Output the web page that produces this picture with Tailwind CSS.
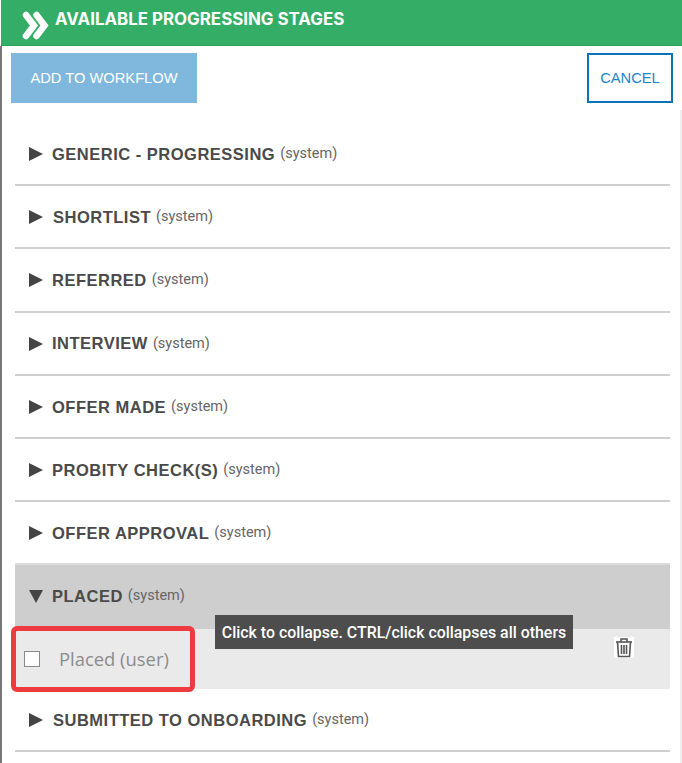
<!DOCTYPE html>
<html lang="en">
<head>
    <meta charset="UTF-8">
    <meta name="viewport" content="width=device-width, initial-scale=1.0">
    <title>Available progressing stages</title>
    <script src="https://cdn.jsdelivr.net/npm/@tailwindcss/browser@4"></script>
</head>
<body class="bg-white">
    <div class="w-[682px] h-[763px] overflow-hidden relative font-['Liberation_Sans',sans-serif]">
        <!-- Header -->
        <header class="h-[46px] bg-[#34ae66] border-b border-[#2fa35e] flex items-center pl-[21px] gap-[6px] ml-[1px]">
            <svg class="mt-[6px]" width="27" height="29" viewBox="0 0 27 29" fill="none" stroke="#ffffff" stroke-width="6.5" stroke-linecap="round" stroke-linejoin="miter">
                <path d="M4 4 L12 14.5 L4 25"/>
                <path d="M14.5 4 L22.5 14.5 L14.5 25"/>
            </svg>
            <span class="-mt-[6px] font-['Inter',sans-serif] font-bold text-[16.9px] text-white">AVAILABLE PROGRESSING STAGES</span>
        </header>

        <div class="border-l-2 border-[#777777] h-full">
            <!-- Actions -->
            <div class="flex justify-between items-start pl-[9px] pr-[9px] pt-[7px] h-[77px]">
                <button class="w-[186px] h-[50px] bg-[#7fb8dc] text-white font-['Liberation_Sans',sans-serif] text-[14.7px]">ADD TO WORKFLOW</button>
                <button class="w-[86px] h-[50px] border-[2px] border-[#0a72b5] text-[#1f85c5] text-[14.7px]">CANCEL</button>
            </div>

            <!-- Stages -->
            <div class="ml-[13px] mr-[12px]">
                <div class="h-[63px] border-b-2 border-[#cfcfcf] flex items-center gap-[9px] pl-[14px] pt-[1px]">
                    <svg width="14" height="14" viewBox="0 0 14 14" fill="#444444"><path d="M0 0 L14 7 L0 14 Z"/></svg>
                    <span class="font-bold text-[16.5px] text-[#4a4a4a] tracking-[0.5px]">GENERIC - PROGRESSING</span>
                    <span class="font-['Roboto',sans-serif] text-[14.5px] text-[#666666] -ml-[4px]">(system)</span>
                </div>
                <div class="h-[63px] border-b-2 border-[#cfcfcf] flex items-center gap-[9px] pl-[14px] pt-[1px]">
                    <svg width="14" height="14" viewBox="0 0 14 14" fill="#444444"><path d="M0 0 L14 7 L0 14 Z"/></svg>
                    <span class="font-bold text-[16.5px] text-[#4a4a4a] tracking-[0.5px] ml-[1px]">SHORTLIST</span>
                    <span class="font-['Roboto',sans-serif] text-[14.5px] text-[#666666] -ml-[4px]">(system)</span>
                </div>
                <div class="h-[64px] border-b-2 border-[#cfcfcf] flex items-center gap-[9px] pl-[14px]">
                    <svg width="14" height="14" viewBox="0 0 14 14" fill="#444444"><path d="M0 0 L14 7 L0 14 Z"/></svg>
                    <span class="font-bold text-[16.5px] text-[#4a4a4a] tracking-[0.5px]">REFERRED</span>
                    <span class="font-['Roboto',sans-serif] text-[14.5px] text-[#666666] -ml-[4px]">(system)</span>
                </div>
                <div class="h-[63px] border-b-2 border-[#cfcfcf] flex items-center gap-[9px] pl-[14px]">
                    <svg width="14" height="14" viewBox="0 0 14 14" fill="#444444"><path d="M0 0 L14 7 L0 14 Z"/></svg>
                    <span class="font-bold text-[16.5px] text-[#4a4a4a] tracking-[0.5px]">INTERVIEW</span>
                    <span class="font-['Roboto',sans-serif] text-[14.5px] text-[#666666] -ml-[4px]">(system)</span>
                </div>
                <div class="h-[63px] border-b-2 border-[#cfcfcf] flex items-center gap-[9px] pl-[14px] pt-[1px]">
                    <svg width="14" height="14" viewBox="0 0 14 14" fill="#444444"><path d="M0 0 L14 7 L0 14 Z"/></svg>
                    <span class="font-bold text-[16.5px] text-[#4a4a4a] tracking-[0.5px]">OFFER MADE</span>
                    <span class="font-['Roboto',sans-serif] text-[14.5px] text-[#666666] -ml-[4px]">(system)</span>
                </div>
                <div class="h-[63px] border-b-2 border-[#cfcfcf] flex items-center gap-[9px] pl-[14px] pt-[1px]">
                    <svg width="14" height="14" viewBox="0 0 14 14" fill="#444444"><path d="M0 0 L14 7 L0 14 Z"/></svg>
                    <span class="font-bold text-[16.5px] text-[#4a4a4a] tracking-[0.5px]">PROBITY CHECK(S)</span>
                    <span class="font-['Roboto',sans-serif] text-[14.5px] text-[#666666] -ml-[4px]">(system)</span>
                </div>
                <div class="h-[63px] border-b-2 border-[#dcdcdc] flex items-center gap-[9px] pl-[14px] pt-[1px]">
                    <svg width="14" height="14" viewBox="0 0 14 14" fill="#444444"><path d="M0 0 L14 7 L0 14 Z"/></svg>
                    <span class="font-bold text-[16.5px] text-[#4a4a4a] tracking-[0.5px]">OFFER APPROVAL</span>
                    <span class="font-['Roboto',sans-serif] text-[14.5px] text-[#666666] -ml-[4px]">(system)</span>
                </div>

                <!-- Expanded stage -->
                <div class="h-[64px] bg-[#cecece] flex items-center gap-[9px] pl-[14px] pb-[2px]">
                    <svg width="14" height="14" viewBox="0 0 14 14" fill="#444444"><path d="M0 1 L14 1 L7 14 Z"/></svg>
                    <span class="font-bold text-[16.5px] text-[#4a4a4a] tracking-[0.5px]">PLACED</span>
                    <span class="font-['Roboto',sans-serif] text-[14.5px] text-[#666666] -ml-[4px]">(system)</span>
                </div>
                <div class="h-[60px] bg-[#eaeaea] flex items-center justify-between pl-[9px] pr-[36px]">
                    <div class="flex items-center gap-[20px]">
                        <span class="w-[16px] h-[16px] bg-white border border-[#8a8a8a]"></span>
                        <span class="font-['Open_Sans',sans-serif] text-[18.4px] text-[#8c8c8c] -ml-[1px]">Placed (user)</span>
                    </div>
                    <svg class="-mt-[24px] bg-white" width="20" height="21" viewBox="0 0 20 21" fill="none" stroke="#555555" stroke-width="1.6">
                        <path d="M2 5 H18"/>
                        <path d="M7 5 V2 H13 V5"/>
                        <path d="M3.5 5 L4.5 19.5 H15.5 L16.5 5"/>
                        <path d="M7.5 8 V17 M10 8 V17 M12.5 8 V17"/>
                    </svg>
                </div>

                <div class="h-[63px] border-b-2 border-[#cfcfcf] flex items-center gap-[9px] pl-[14px] pt-[1px]">
                    <svg width="14" height="14" viewBox="0 0 14 14" fill="#444444"><path d="M0 0 L14 7 L0 14 Z"/></svg>
                    <span class="font-bold text-[16.5px] text-[#4a4a4a] tracking-[0.5px] ml-[1px]">SUBMITTED TO ONBOARDING</span>
                    <span class="font-['Roboto',sans-serif] text-[14.5px] text-[#666666] -ml-[4px]">(system)</span>
                </div>
            </div>
        </div>

        <!-- Tooltip over the expanded stage -->
        <div class="absolute left-[215px] top-[615px] w-[358px] h-[34px] pt-[1px] bg-[#4d4d4d] text-white font-['Roboto',sans-serif] font-medium text-[15.9px] flex items-center justify-center">Click to collapse. CTRL/click collapses all others</div>

        <!-- Red annotation -->
        <div class="absolute left-[11px] top-[626px] w-[184px] h-[66px] border-[5px] border-[#ee3b3f] rounded-[6px]"></div>

        <!-- Faint right edge of the panel -->
        <div class="absolute right-0 top-[110px] bottom-0 w-[2px] bg-[#efefef]"></div>
    </div>
</body>
</html>
